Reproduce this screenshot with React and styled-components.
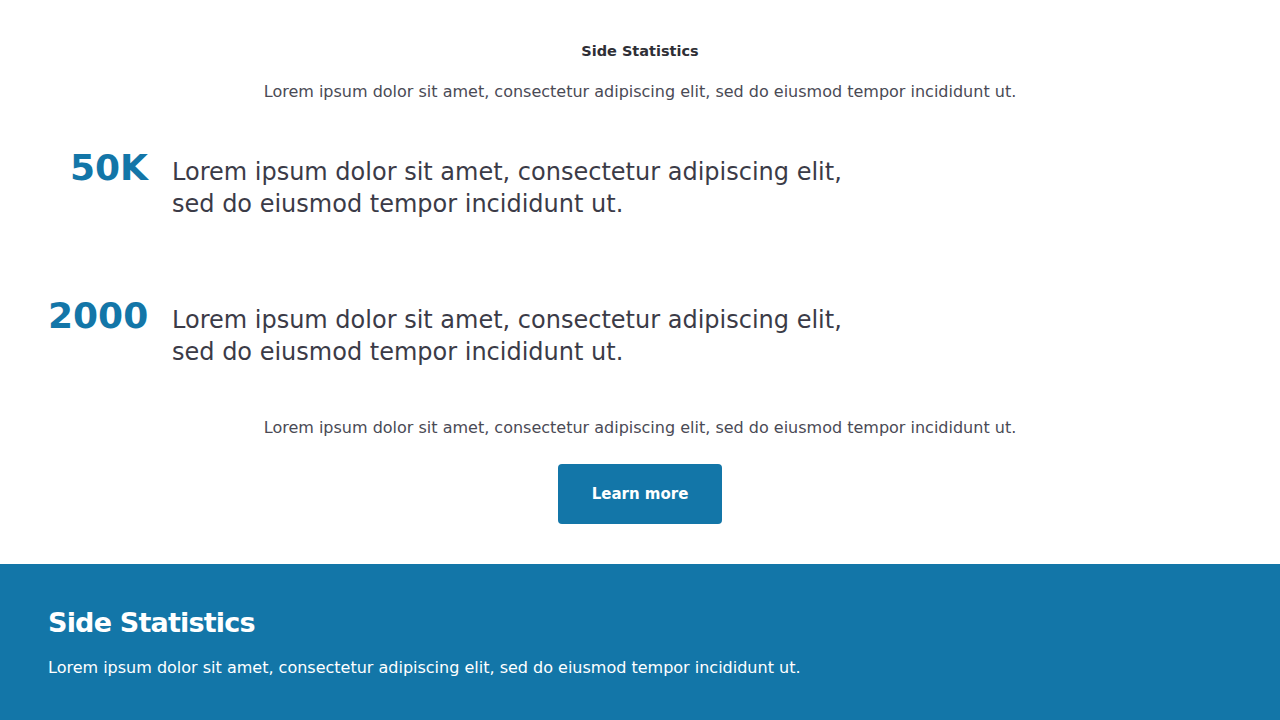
import React from "react";
import styled, { createGlobalStyle } from "styled-components";

const Global = createGlobalStyle`
  html, body { margin: 0; padding: 0; background: #fff; }
  body { font-family: "DejaVu Sans", sans-serif; color: #3b3b47; }
  * { box-sizing: border-box; }
`;

const BLUE = "#1376a8";

const Top = styled.section`
  display: flex;
  flex-direction: column;
  align-items: center;
  padding: 40px 48px 40px;
`;

const SmallTitle = styled.h3`
  margin: 0;
  font-size: 14.5px;
  line-height: 22px;
  font-weight: 700;
  color: #2f2f36;
`;

const Lead = styled.p`
  margin: ${(p) => p.$mt || 0}px 0 0;
  font-size: 16px;
  line-height: 22px;
  color: #4a4a55;
  text-align: center;
`;

const Stats = styled.div`
  align-self: stretch;
  display: flex;
  flex-direction: column;
  gap: 84px;
  margin-top: 53px;
`;

const StatRow = styled.div`
  display: grid;
  grid-template-columns: 100px 1fr;
  column-gap: 24px;
  align-items: start;
`;

const StatNum = styled.div`
  font-size: 36px;
  line-height: 56px;
  font-weight: 800;
  color: ${BLUE};
  text-align: right;
  margin-top: -16px;
  white-space: nowrap;
`;

const StatText = styled.p`
  margin: 0;
  max-width: 690px;
  font-size: 24px;
  line-height: 32px;
  color: #3b3b47;
`;

const Button = styled.button`
  margin-top: 25px;
  width: 164px;
  height: 60px;
  border: none;
  border-radius: 4px;
  background: ${BLUE};
  color: #fff;
  font-family: inherit;
  font-size: 15px;
  font-weight: 700;
  cursor: pointer;
`;

const Band = styled.section`
  background: ${BLUE};
  color: #fff;
  padding: 41px 48px 44px;
`;

const BandTitle = styled.h2`
  margin: 0;
  font-size: 27px;
  line-height: 36px;
  font-weight: 700;
  letter-spacing: -0.8px;
`;

const BandText = styled.p`
  margin: 16px 0 0;
  font-size: 16px;
  line-height: 22px;
`;

const stats = [
  { n: "50K", t: "Lorem ipsum dolor sit amet, consectetur adipiscing elit, sed do eiusmod tempor incididunt ut." },
  { n: "2000", t: "Lorem ipsum dolor sit amet, consectetur adipiscing elit, sed do eiusmod tempor incididunt ut." },
];

const lorem = "Lorem ipsum dolor sit amet, consectetur adipiscing elit, sed do eiusmod tempor incididunt ut.";

export default function App() {
  return (
    <>
      <Global />
      <Top>
        <SmallTitle>Side Statistics</SmallTitle>
        <Lead $mt={19}>{lorem}</Lead>
        <Stats>
          {stats.map((s) => (
            <StatRow key={s.n}>
              <StatNum>{s.n}</StatNum>
              <StatText>{s.t}</StatText>
            </StatRow>
          ))}
        </Stats>
        <Lead $mt={49}>{lorem}</Lead>
        <Button>Learn more</Button>
      </Top>
      <Band>
        <BandTitle>Side Statistics</BandTitle>
        <BandText>{lorem}</BandText>
      </Band>
    </>
  );
}
